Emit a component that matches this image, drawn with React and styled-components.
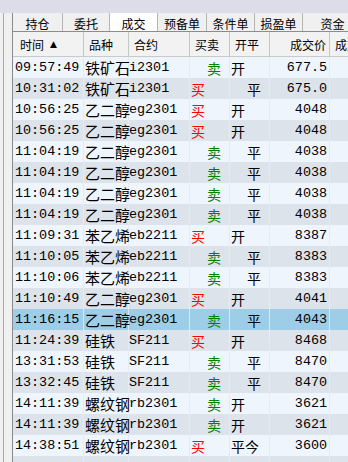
import React from "react";
import styled, { createGlobalStyle } from "styled-components";

const Global = createGlobalStyle`
  html, body { margin: 0; padding: 0; background: #f0f0f0; }
  body { width: 348px; height: 462px; overflow: hidden; }
  #root { width: 348px; height: 462px; }
`;

const CJK = `"Noto Sans CJK SC", "Noto Sans", sans-serif`;
const MONO = `"Liberation Mono", "DejaVu Sans Mono", "Noto Sans CJK SC", monospace`;

const Screen = styled.div`
  width: 348px;
  height: 462px;
  display: grid;
  grid-template-rows: 13px 1fr;
  overflow: hidden;
  background: #f0f0f0;
`;

const TopStrip = styled.div`
  background: #dcdde8;
`;

const Body = styled.div`
  display: flex;
  min-height: 0;
`;

const Gutter = styled.div`
  width: 8px;
  margin-left: 3px;
  border-left: 1px solid #a9a9a9;
  background: #f0f0f0;
  flex: none;
`;

const Panel = styled.div`
  flex: 1;
  min-width: 0;
  display: flex;
  flex-direction: column;
  border-left: 1px solid #8a8a8a;
  overflow: hidden;
`;

const TabBar = styled.div`
  height: 18px;
  display: flex;
  background: #f0f0f0;
  flex: none;
`;

const Tab = styled.div`
  flex: none;
  width: ${(p) => p.$w}px;
  box-sizing: border-box;
  border-left: ${(p) => (p.$first ? "none" : "1px solid #b4b4b4")};
  background: ${(p) => (p.$active ? "#ffffff" : "#f0f0f0")};
  font: 12px ${CJK};
  color: #000;
  display: flex;
  align-items: center;
  justify-content: center;
  padding-top: 2px;
  white-space: nowrap;
`;

const Table = styled.div`
  flex: 1;
  display: flex;
  flex-direction: column;
  border-top: 1px solid #8c8c8c;
  min-height: 0;
`;

const COLS = "71px 45px 61px 40px 40px 60px 80px";

const HeaderRow = styled.div`
  display: grid;
  grid-template-columns: ${COLS};
  height: 24px;
  background: #f2f2f2;
  border-bottom: 1px solid #c9c9c9;
  flex: none;
`;

const HeadCell = styled.div`
  box-sizing: border-box;
  border-right: 1px solid #c6c6c6;
  font: 12px ${CJK};
  color: #000;
  display: flex;
  align-items: center;
  justify-content: ${(p) => (p.$right ? "flex-end" : "flex-start")};
  padding: ${(p) => (p.$right ? "0 3px 0 0" : `0 0 0 ${p.$pl ?? 5}px`)};
  white-space: nowrap;
  overflow: hidden;
`;

const Arrow = styled.span`
  font-size: 9px;
  margin-left: 6px;
  font-family: "DejaVu Sans", sans-serif;
`;

const Row = styled.div`
  display: grid;
  grid-template-columns: ${COLS};
  height: 21px;
  flex: none;
  background: ${(p) => (p.$sel ? "#9ecde7" : p.$odd ? "#dde3eb" : "#eef5fd")};
`;

const Cell = styled.div`
  box-sizing: border-box;
  border-right: 1px solid ${(p) => (p.$sel ? "#d8e9f3" : "#e7ebf0")};
  display: flex;
  align-items: center;
  justify-content: ${(p) => (p.$right ? "flex-end" : "flex-start")};
  padding: ${(p) => (p.$right ? "0 2px 0 0" : `0 0 0 ${p.$pl ?? 1}px`)};
  white-space: nowrap;
  overflow: ${(p) => (p.$spill ? "visible" : "hidden")};
  color: #000;
  font: ${(p) =>
    p.$mono ? `13.4px ${MONO}` : `${p.$big ? 15 : 14}px ${CJK}`};
`;

const Side = styled.span`
  color: ${(p) => (p.$buy ? "#ff0000" : "#008000")};
`;

const tabs = [
  ["持仓", 49],
  ["委托", 47],
  ["成交", 48],
  ["预备单", 49],
  ["条件单", 48],
  ["损盈单", 48],
  ["资金", 60],
];

const rows = [
  ["09:57:49", "铁矿石", "i2301", "卖", "开", "677.5"],
  ["10:31:02", "铁矿石", "i2301", "买", "平", "675.0"],
  ["10:56:25", "乙二醇", "eg2301", "买", "开", "4048"],
  ["10:56:25", "乙二醇", "eg2301", "买", "开", "4048"],
  ["11:04:19", "乙二醇", "eg2301", "卖", "平", "4038"],
  ["11:04:19", "乙二醇", "eg2301", "卖", "平", "4038"],
  ["11:04:19", "乙二醇", "eg2301", "卖", "平", "4038"],
  ["11:04:19", "乙二醇", "eg2301", "卖", "平", "4038"],
  ["11:09:31", "苯乙烯", "eb2211", "买", "开", "8387"],
  ["11:10:05", "苯乙烯", "eb2211", "卖", "平", "8383"],
  ["11:10:06", "苯乙烯", "eb2211", "卖", "平", "8383"],
  ["11:10:49", "乙二醇", "eg2301", "买", "开", "4041"],
  ["11:16:15", "乙二醇", "eg2301", "卖", "平", "4043"],
  ["11:24:39", "硅铁", "SF211", "买", "开", "8468"],
  ["13:31:53", "硅铁", "SF211", "卖", "平", "8470"],
  ["13:32:45", "硅铁", "SF211", "卖", "平", "8470"],
  ["14:11:39", "螺纹钢", "rb2301", "卖", "开", "3621"],
  ["14:11:39", "螺纹钢", "rb2301", "卖", "开", "3621"],
  ["14:38:51", "螺纹钢", "rb2301", "买", "平今", "3600"],
];

export default function App() {
  return (
    <>
      <Global />
      <Screen>
        <TopStrip />
        <Body>
          <Gutter />
          <Panel>
            <TabBar>
              {tabs.map(([t, w], i) => (
                <Tab key={t} $w={w} $first={i === 0} $active={t === "成交"}>
                  {t}
                </Tab>
              ))}
            </TabBar>
            <Table>
              <HeaderRow>
                <HeadCell $pl={7}>
                  时间<Arrow>▲</Arrow>
                </HeadCell>
                <HeadCell>品种</HeadCell>
                <HeadCell>合约</HeadCell>
                <HeadCell>买卖</HeadCell>
                <HeadCell>开平</HeadCell>
                <HeadCell $right>成交价</HeadCell>
                <HeadCell $pl={5}>成交量</HeadCell>
              </HeaderRow>
              {rows.map((r, i) => {
                const sel = i === 12;
                const odd = i % 2 === 1;
                const buy = r[3] === "买";
                const open = r[4] !== "平";
                return (
                  <Row key={i} $odd={odd} $sel={sel}>
                    <Cell $mono $pl={2} $sel={sel}>{r[0]}</Cell>
                    <Cell $big $spill $sel={sel}>{r[1]}</Cell>
                    <Cell $mono $pl={0} $sel={sel}>{r[2]}</Cell>
                    <Cell $pl={buy ? 1 : 17} $sel={sel}>
                      <Side $buy={buy}>{r[3]}</Side>
                    </Cell>
                    <Cell $pl={open ? 1 : 17} $sel={sel}>{r[4]}</Cell>
                    <Cell $mono $right $sel={sel}>{r[5]}</Cell>
                    <Cell $sel={sel} />
                  </Row>
                );
              })}
              <Row $odd>
                <Cell />
                <Cell />
                <Cell />
                <Cell />
                <Cell />
                <Cell />
                <Cell />
              </Row>
            </Table>
          </Panel>
        </Body>
      </Screen>
    </>
  );
}
